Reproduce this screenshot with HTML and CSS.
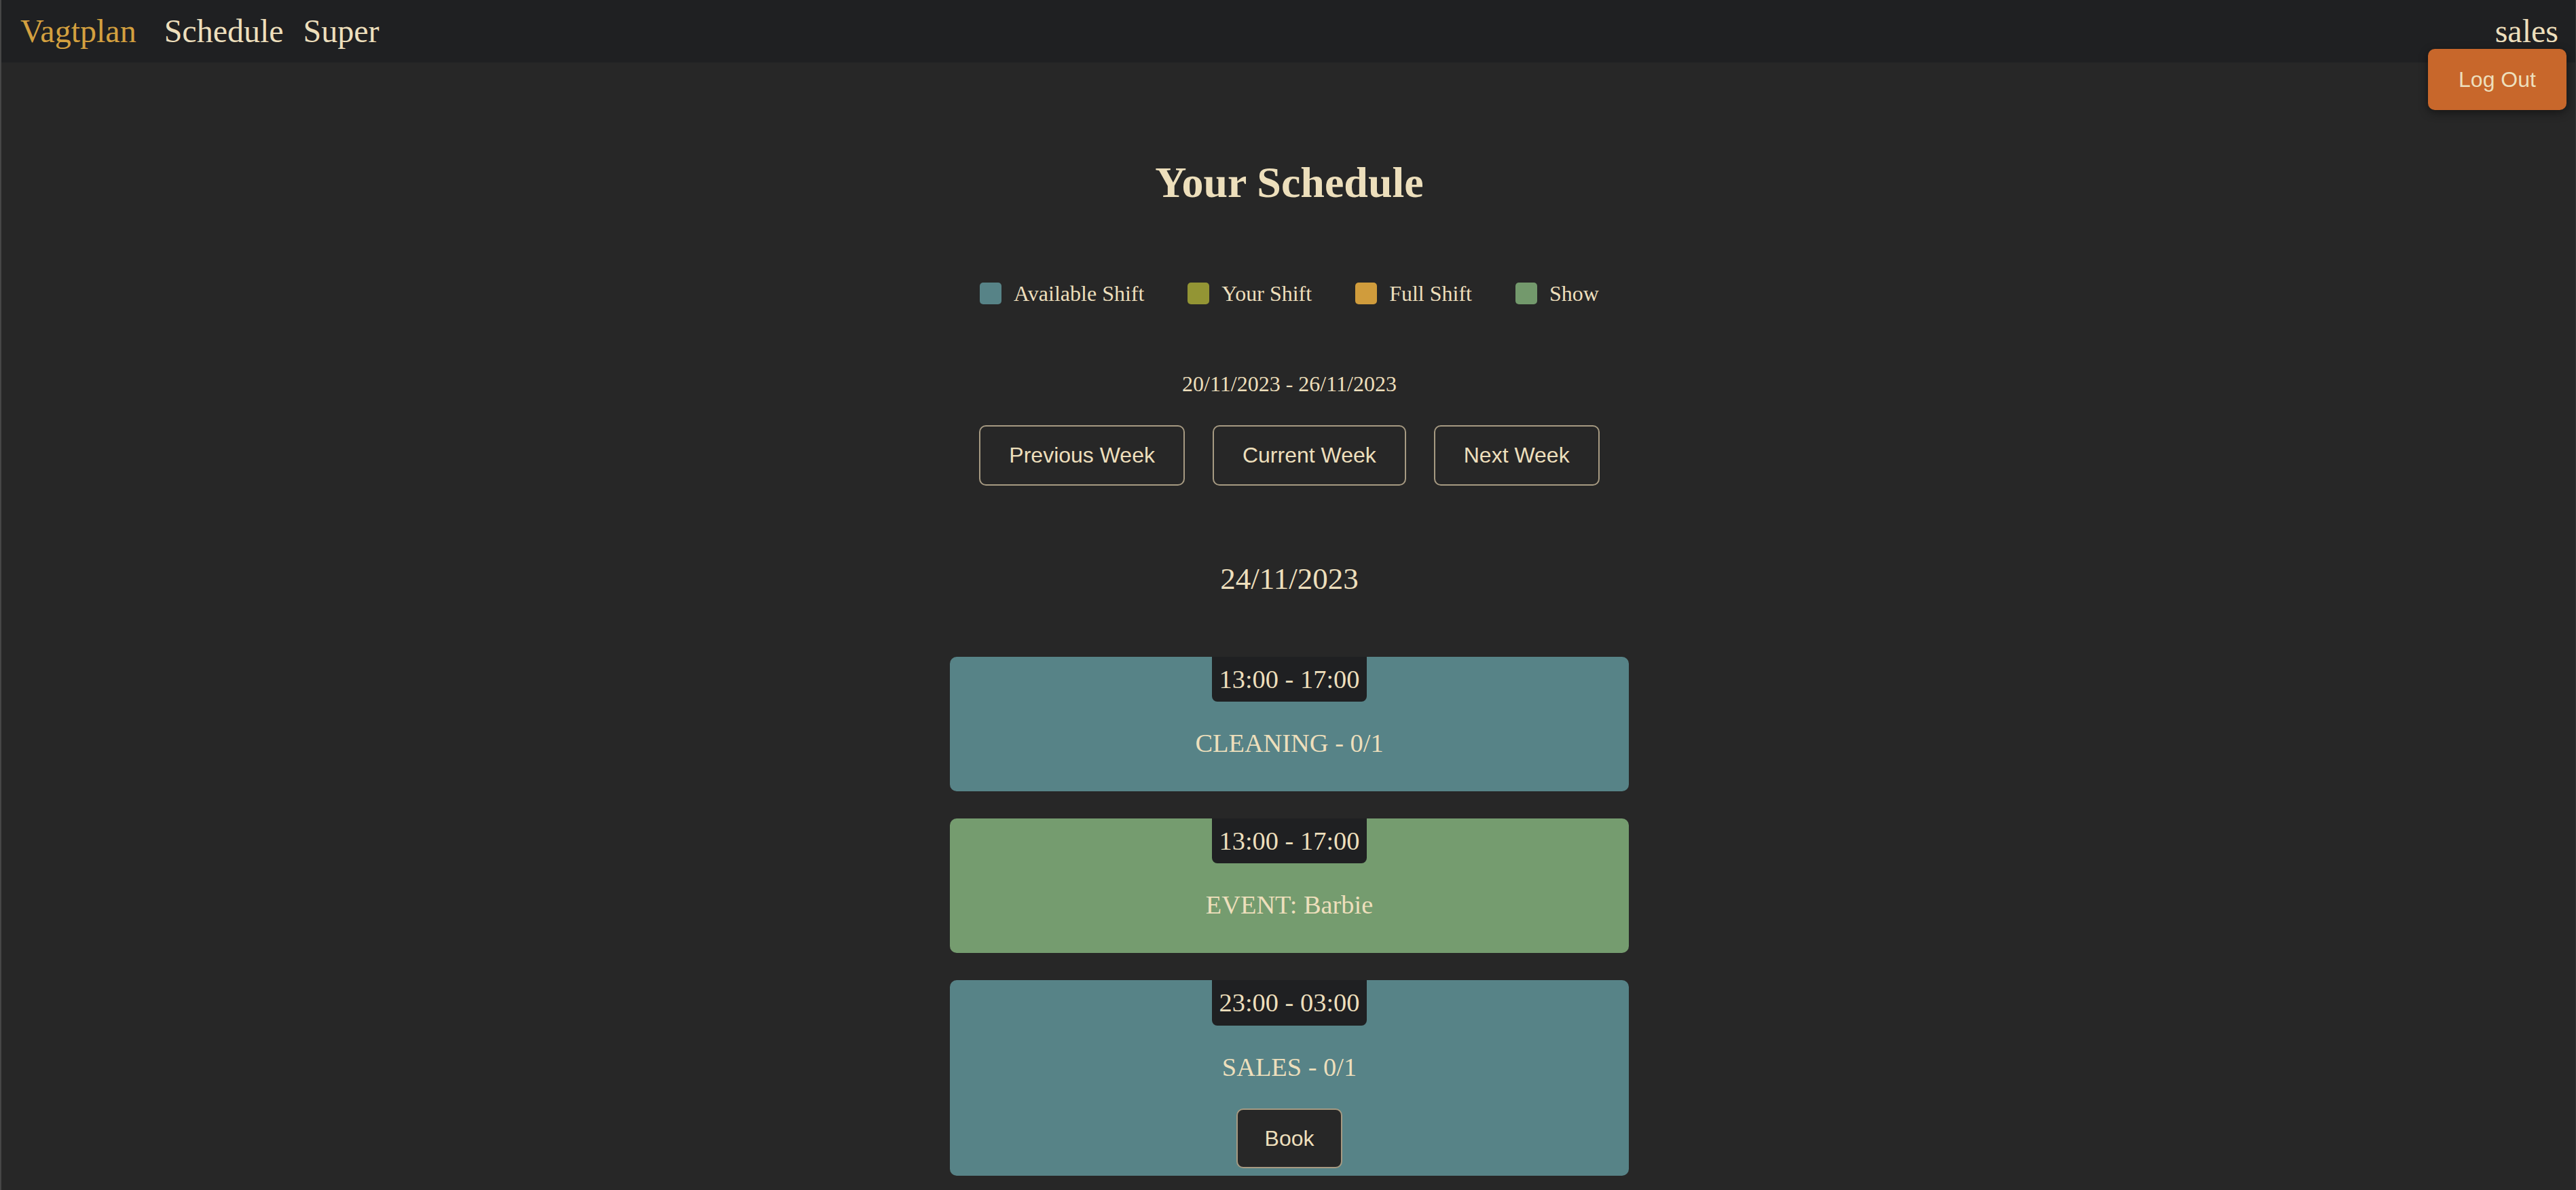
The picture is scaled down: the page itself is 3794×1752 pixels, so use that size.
FILE: index.html
```html
<!DOCTYPE html>
<html lang="en">
<head>
<meta charset="utf-8">
<title>Vagtplan</title>
<link rel="stylesheet" href="styles.css">
</head>
<body>
<div class="app">
  <nav class="navbar">
    <div class="nav-left">
      <a class="brand" href="#">Vagtplan</a>
      <div class="nav-links">
        <a class="nav-link" href="#">Schedule</a>
        <a class="nav-link" href="#">Super</a>
      </div>
    </div>
    <div class="user">
      <span class="user-name">sales</span>
      <button class="logout">Log Out</button>
    </div>
  </nav>

  <main class="content">
    <h1 class="title">Your Schedule</h1>

    <div class="legend">
      <div class="legend-item"><span class="swatch available"></span>Available Shift</div>
      <div class="legend-item"><span class="swatch yours"></span>Your Shift</div>
      <div class="legend-item"><span class="swatch full"></span>Full Shift</div>
      <div class="legend-item"><span class="swatch show"></span>Show</div>
    </div>

    <div class="range">20/11/2023 - 26/11/2023</div>

    <div class="week-nav">
      <button class="btn">Previous Week</button>
      <button class="btn">Current Week</button>
      <button class="btn">Next Week</button>
    </div>

    <h2 class="day">24/11/2023</h2>

    <div class="shifts">
      <div class="shift available">
        <div class="time">13:00 - 17:00</div>
        <div class="shift-name">CLEANING - 0/1</div>
      </div>
      <div class="shift show">
        <div class="time">13:00 - 17:00</div>
        <div class="shift-name">EVENT: Barbie</div>
      </div>
      <div class="shift available">
        <div class="time">23:00 - 03:00</div>
        <div class="shift-name">SALES - 0/1</div>
        <button class="btn book">Book</button>
      </div>
    </div>
  </main>
</div>
</body>
</html>
```

FILE: styles.css
```css
html, body {
  margin: 0;
  padding: 0;
}

body {
  background: #272727;
  color: #eddfbc;
  font-family: "Liberation Serif", "Times New Roman", serif;
  font-size: 32px;
  line-height: 1.15;
}

.app {
  min-height: 1752px;
  border-left: 2px solid #464646;
  border-right: 1px solid #333333;
  box-sizing: border-box;
  position: relative;
}

.navbar {
  height: 92px;
  background: #1f2022;
  display: flex;
  align-items: center;
  justify-content: space-between;
  padding: 0 25px 0 28px;
  font-size: 48px;
}

.nav-left {
  display: flex;
  align-items: center;
}

.brand {
  color: #d4a03f;
  text-decoration: none;
  margin-right: 41px;
}

.nav-links {
  display: flex;
  gap: 29px;
}

.nav-link {
  color: #eddfbc;
  text-decoration: none;
}

.user-name {
  color: #eddfbc;
}

.logout {
  position: absolute;
  top: 72px;
  right: 13px;
  width: 204px;
  height: 90px;
  background: #c8672b;
  color: #eddfbc;
  border: none;
  border-radius: 10px;
  font-family: "Liberation Sans", Arial, sans-serif;
  font-size: 32px;
  box-shadow: 0 4px 14px rgba(0, 0, 0, 0.45);
}

.content {
  display: flex;
  flex-direction: column;
  align-items: center;
  padding-left: 3px;
}

.title {
  font-size: 64px;
  font-weight: bold;
  margin: 140px 0 0;
  line-height: 1.15;
}

.legend {
  display: flex;
  align-items: center;
  gap: 64px;
  margin-top: 108px;
}

.legend-item {
  display: flex;
  align-items: center;
  gap: 18px;
}

.swatch {
  width: 32px;
  height: 32px;
  border-radius: 5px;
  display: inline-block;
}

.swatch.available { background: #578387; }
.swatch.yours { background: #939534; }
.swatch.full { background: #d09c3c; }
.swatch.show { background: #73996c; }

.range {
  margin-top: 97px;
}

.week-nav {
  display: flex;
  gap: 41px;
  margin-top: 42px;
}

.btn {
  background: #272727;
  color: #eddfbc;
  border: 2px solid #a69a82;
  border-radius: 10px;
  font-family: "Liberation Sans", Arial, sans-serif;
  font-size: 32px;
  line-height: 1.15;
  padding: 24px 42px;
}

.day {
  font-size: 45px;
  font-weight: normal;
  margin: 112px 0 0;
  line-height: 1.15;
}

.shifts {
  display: flex;
  flex-direction: column;
  gap: 40px;
  margin-top: 88px;
  width: 1000px;
}

.shift {
  border-radius: 10px;
  display: flex;
  flex-direction: column;
  align-items: center;
  padding-bottom: 10px;
}

.shift.available { background: #578387; }
.shift.show { background: #759c6f; }

.time {
  background: #1f2022;
  font-size: 38.4px;
  padding: 11px 11px;
  border-radius: 0 0 8px 8px;
}

.shift-name {
  font-size: 38.4px;
  margin: 39px 0;
}

.btn.book {
  padding: 24px 40px;
  margin-bottom: 1px;
}
```
